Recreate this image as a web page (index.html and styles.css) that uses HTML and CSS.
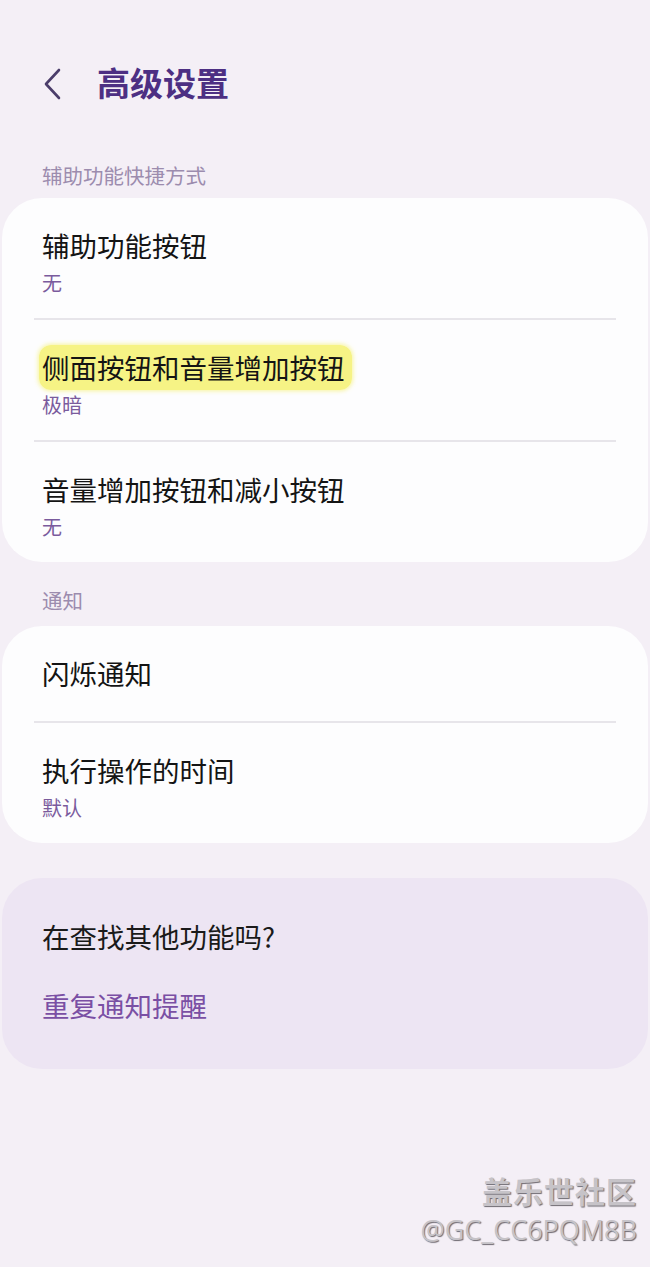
FILE: index.html
```html
<!DOCTYPE html>
<html lang="zh-CN">
<head>
<meta charset="utf-8">
<link rel="stylesheet" href="styles.css">
</head>
<body>
<div class="page">
  <header class="appbar">
    <svg class="back" width="22" height="34" viewBox="0 0 22 34"><path d="M17 3 L4 17 L17 31" fill="none" stroke="#4b3d6a" stroke-width="2.6" stroke-linecap="round" stroke-linejoin="round"/></svg>
    <h1 class="title">高级设置</h1>
  </header>

  <div class="section-label first">辅助功能快捷方式</div>
  <section class="card">
    <div class="item">
      <div class="item-title">辅助功能按钮</div>
      <div class="item-sub">无</div>
    </div>
    <div class="divider"></div>
    <div class="item">
      <div class="item-title"><span class="hl">侧面按钮和音量增加按钮</span></div>
      <div class="item-sub">极暗</div>
    </div>
    <div class="divider"></div>
    <div class="item">
      <div class="item-title">音量增加按钮和减小按钮</div>
      <div class="item-sub">无</div>
    </div>
  </section>

  <div class="section-label">通知</div>
  <section class="card">
    <div class="item single">
      <div class="item-title">闪烁通知</div>
    </div>
    <div class="divider"></div>
    <div class="item">
      <div class="item-title">执行操作的时间</div>
      <div class="item-sub">默认</div>
    </div>
  </section>

  <section class="card suggest">
    <div class="suggest-q">在查找其他功能吗?</div>
    <div class="suggest-link">重复通知提醒</div>
  </section>

  <div class="watermark">
    <div class="wm-1">盖乐世社区</div>
    <div class="wm-2">@GC_CC6PQM8B</div>
  </div>
</div>
</body>
</html>
```

FILE: styles.css
```css
html, body {
  margin: 0;
  padding: 0;
  background: #f4eff6;
}
body {
  font-family: "Noto Sans CJK SC", "Noto Sans", sans-serif;
  width: 650px;
  height: 1267px;
  overflow: hidden;
}
.page {
  position: relative;
  height: 1267px;
}
.appbar {
  display: flex;
  align-items: center;
  height: 36px;
  padding: 64px 0 0 42px;
}
.back {
  display: block;
  margin-top: 4px;
}
.title {
  margin: 0 0 0 33px;
  font-size: 33px;
  line-height: 36px;
  font-weight: 700;
  color: #4d2f83;
}
.section-label {
  font-size: 20.5px;
  line-height: 28px;
  color: #9c8cae;
  padding: 24px 0 12px 42px;
}
.section-label.first {
  padding-top: 61px;
  padding-bottom: 9px;
}
.card {
  background: #fdfdfe;
  border-radius: 40px;
  margin: 0 2px;
}
.item {
  padding: 29px 40px 21px 40px;
}
.item.single {
  padding-bottom: 30px;
}
.item-title {
  font-size: 27.5px;
  line-height: 36px;
  color: #141414;
}
.item-sub {
  margin-top: 6px;
  font-size: 20px;
  line-height: 28px;
  color: #7a5b9d;
}
.divider {
  height: 2px;
  background: #e7e5ea;
  margin: 0 32px;
}
.hl {
  background: #f6f385;
  border-radius: 12px;
  padding: 2px 7px 3px 3px;
  margin-left: -3px;
  box-shadow: 0 0 4px 1px rgba(246, 243, 133, 0.8);
}
.suggest {
  background: #ede5f3;
  margin-top: 35px;
  padding: 40px 40px 46px 40px;
}
.suggest-q {
  font-size: 27.5px;
  line-height: 36px;
  color: #1a1a1a;
}
.suggest-link {
  margin-top: 33px;
  font-size: 27.5px;
  line-height: 36px;
  color: #7a4fa4;
}
.watermark {
  position: absolute;
  right: 13px;
  top: 1170px;
  text-align: right;
  color: #c6c3c8;
  text-shadow: 1px 1px 1px #6e6a72;
}
.wm-1 {
  font-size: 30px;
  line-height: 40px;
  font-weight: 700;
  letter-spacing: 1px;
}
.wm-2 {
  font-family: "Open Sans", "Noto Sans", sans-serif;
  font-size: 27px;
  line-height: 40px;
}
```
